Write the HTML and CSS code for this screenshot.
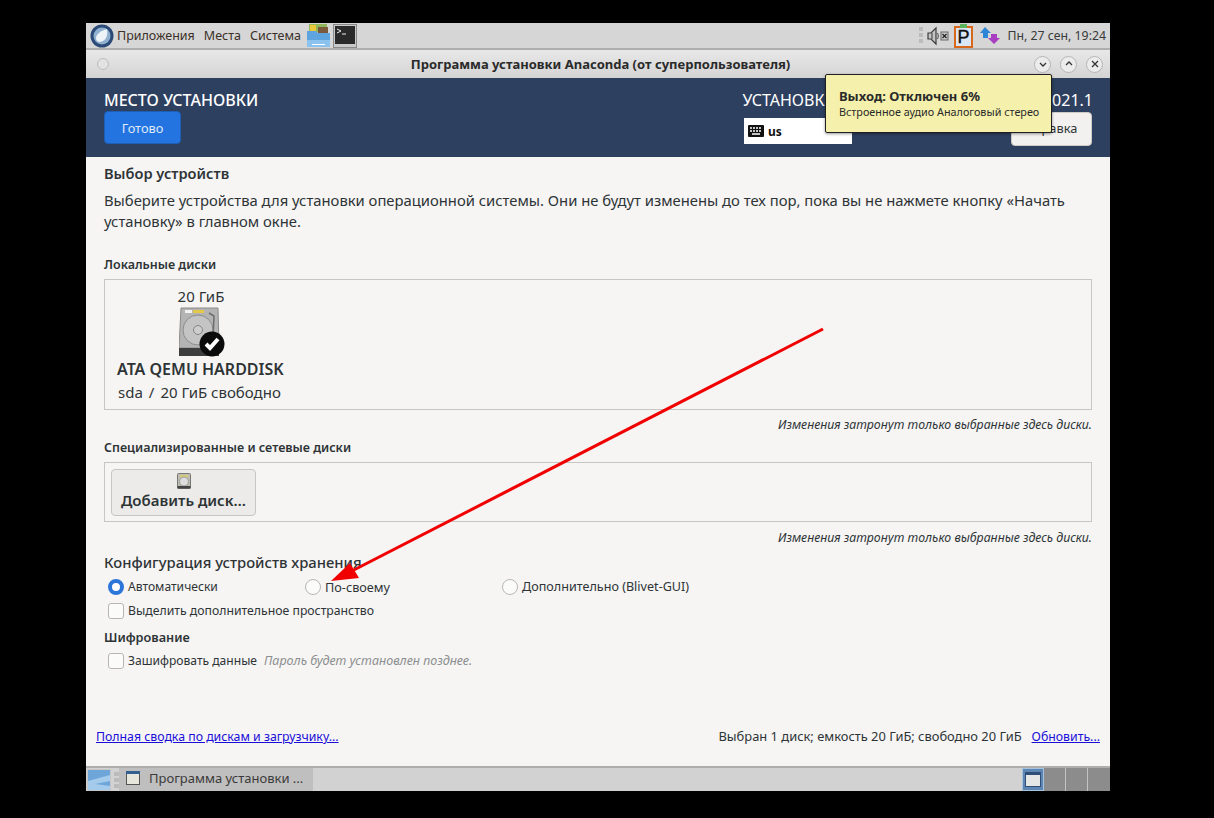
FILE: index.html
```html
<!DOCTYPE html>
<html lang="ru">
<head>
<meta charset="utf-8">
<title>Anaconda</title>
<link rel="stylesheet" href="styles.css">
</head>
<body>
<div class="screen">
  <div class="panel">
    <svg class="logo" width="24" height="24" viewBox="0 0 24 24"><circle cx="12" cy="12" r="11.500" fill="#2b4a78"/><circle cx="12" cy="12" r="8.500" fill="#8fb0cf"/><path d="M17 5c1 5 0 12-7 13-4 0-5-4-3-7 2-3 6-5 10-6z" fill="#eef3f7"/></svg>
    <span class="menu first">Приложения</span>
    <span class="menu">Места</span>
    <span class="menu">Система</span>
    <svg class="launcher" width="25" height="25" viewBox="0 0 25 25"><rect x="3" y="1" width="18" height="8" fill="#8fb75a"/><rect x="4" y="2" width="6" height="6" fill="#e9c83c"/><rect x="12" y="4" width="10" height="7" fill="#7a5a3a"/><path d="M1 8h9l2 2h12v13H1z" fill="#5ea5e0"/><rect x="1" y="17" width="23" height="7" fill="#8cc3ee"/><rect x="6" y="21" width="13" height="1" fill="#fff"/></svg>
    <svg class="launcher term" width="24" height="24" viewBox="0 0 24 24"><rect x=".5" y=".5" width="23" height="23" fill="#c9c9c9" stroke="#8a8a8a"/><rect x="2" y="2" width="20" height="18" fill="#2a2a2a"/><path d="M4 5l4 2-4 2" fill="none" stroke="#eee"/><path d="M9 10h4" stroke="#eee"/></svg>
    <div class="tray">
      <span class="grip"></span>
      <svg width="22" height="20" viewBox="0 0 22 20"><path d="M1 7h3l5-5v16l-5-5H1z" fill="#c4c4c4" stroke="#3c3c3c" stroke-width="1.200"/><path d="M5 7v6" stroke="#3c3c3c"/><path d="M10.500 7c1 2 1 4 0 6" fill="none" stroke="#444"/><rect x="14" y="6" width="7" height="8" fill="#ccc" stroke="#666"/><path d="M15.500 8l4 4m0-4l-4 4" stroke="#222" stroke-width="1.300"/></svg>
      <svg class="clip" width="19" height="24" viewBox="0 0 19 24"><rect x="1" y="3" width="17" height="20" fill="#dbe7f5" stroke="#d8691c" stroke-width="2"/><rect x="6" y="0" width="7" height="4" fill="#5bb35b"/><text x="9.500" y="19" text-anchor="middle" class="clip-p">P</text></svg>
      <svg class="net" width="22" height="20" viewBox="0 0 22 20"><path d="M6 1l6 6H9v5H4V7H1z" fill="#2f86d6"/><path d="M15 18l-6-6h3V8h6v4h3z" fill="#a83fc0"/></svg>
      <span class="clock">Пн, 27 сен, 19:24</span>
    </div>
  </div>

  <div class="titlebar">
    <span class="dot"></span>
    <span class="title">Программа установки Anaconda (от суперпользователя)</span>
    <div class="winbtns">
      <span class="winbtn"><svg width="10" height="10" viewBox="0 0 10 10"><path d="M2 4l3 3 3-3" fill="none" stroke="#333" stroke-width="1.300"/></svg></span>
      <span class="winbtn"><svg width="10" height="10" viewBox="0 0 10 10"><path d="M2 6l3-3 3 3" fill="none" stroke="#333" stroke-width="1.300"/></svg></span>
      <span class="winbtn"><svg width="10" height="10" viewBox="0 0 10 10"><path d="M2 2l6 6m0-6l-6 6" fill="none" stroke="#333" stroke-width="1.300"/></svg></span>
    </div>
  </div>

  <header class="head">
    <div class="head-left">
      <div class="head-title">МЕСТО УСТАНОВКИ</div>
      <button class="done">Готово</button>
    </div>
    <div class="head-right">
      <div class="head-product">УСТАНОВКА ROSA FRESH DESKTOP R11 2021.1</div>
      <div class="head-row">
        <div class="kbd">
          <svg width="16" height="12" viewBox="0 0 16 12"><rect width="16" height="12" rx="1" fill="#111"/><path d="M2 3h2m1 0h2m1 0h2m1 0h2M2 6h2m1 0h2m1 0h2m1 0h2M4 9h8" stroke="#fff" stroke-width="1.300"/></svg>
          <span>us</span>
        </div>
        <button class="help">Справка</button>
      </div>
    </div>
  </header>

  <main class="content">
    <h2 class="h-main">Выбор устройств</h2>
    <p class="intro">Выберите устройства для установки операционной системы. Они не будут изменены до тех пор, пока вы не нажмете кнопку «Начать установку» в главном окне.</p>

    <h3 class="h-sub local">Локальные диски</h3>
    <section class="box disks">
      <div class="disk">
        <div class="size">20 ГиБ</div>
        <svg class="hdd" width="46" height="50" viewBox="0 0 46 50">
          <path d="M2 1h37l1 40H0z" fill="#b4b4b4" stroke="#8a8a8a"/>
          <rect x="0" y="41" width="40" height="8" fill="#3d3d3d"/>
          <rect x="14" y="3" width="11" height="3" fill="#e3c84a"/>
          <rect x="6" y="3" width="7" height="3" fill="#f2f2f2"/>
          <circle cx="19" cy="23" r="15" fill="#c4c4c4" stroke="#8c8c8c"/>
          <circle cx="19" cy="23" r="4.500" fill="#cdcdcd" stroke="#858585"/>
          <path d="M30 6l5 3-1 22" fill="none" stroke="#6d6d6d" stroke-width="1.500"/>
          <circle cx="33" cy="37" r="12.500" fill="#0b0b0b"/>
          <path d="M27 37l4 4 8-9" fill="none" stroke="#fff" stroke-width="4"/>
        </svg>
        <div class="disk-name">ATA QEMU HARDDISK</div>
        <div class="disk-info"><span>sda</span><span class="sl">/</span><span>20 ГиБ свободно</span></div>
      </div>
    </section>
    <p class="note">Изменения затронут только выбранные здесь диски.</p>

    <h3 class="h-sub special">Специализированные и сетевые диски</h3>
    <section class="box adds">
      <button class="add">
        <svg width="16" height="16" viewBox="0 0 16 16"><rect x="1.500" y=".5" width="13" height="15" rx="1" fill="#bdbdb0" stroke="#777"/><rect x="4" y="2" width="8" height="2" fill="#d8cd77"/><circle cx="8" cy="8.500" r="4.500" fill="#ddd" stroke="#999"/><rect x="1.500" y="13" width="13" height="2.500" fill="#444"/></svg>
        <span>Добавить диск…</span>
      </button>
    </section>
    <p class="note note-last">Изменения затронут только выбранные здесь диски.</p>

    <h2 class="h-config">Конфигурация устройств хранения</h2>
    <div class="radios">
      <label class="opt opt-auto"><span class="radio on"></span>Автоматически</label>
      <label class="opt opt-own"><span class="radio"></span>По-своему</label>
      <label class="opt opt-adv"><span class="radio"></span>Дополнительно (Blivet-GUI)</label>
    </div>
    <label class="opt check-row"><span class="check"></span>Выделить дополнительное пространство</label>
    <h3 class="h-enc">Шифрование</h3>
    <label class="opt enc-row"><span class="check"></span>Зашифровать данные<em class="hint">Пароль будет установлен позднее.</em></label>

    <div class="summary">
      <a class="link" href="#">Полная сводка по дискам и загрузчику...</a>
      <div class="summary-right">
        <span class="summary-text">Выбран 1 диск; емкость 20 ГиБ; свободно 20 ГиБ</span>
        <a class="link" href="#">Обновить...</a>
      </div>
    </div>
  </main>

  <footer class="taskbar">
    <svg class="showdesk" width="24" height="22" viewBox="0 0 24 22"><rect x=".5" y=".5" width="23" height="21" fill="#6fa6da" stroke="#c6c6c6"/><path d="M1 12l22-6v6L8 15l15 2v4H1z" fill="#a5cbec"/></svg>
    <span class="task-grip"></span>
    <div class="task">
      <svg width="14" height="14" viewBox="0 0 14 14"><rect x=".5" y=".5" width="13" height="13" fill="#e6e6dc" stroke="#555"/><rect x="0" y="0" width="14" height="3" fill="#34608f"/></svg>
      <span>Программа установки ...</span>
    </div>
    <div class="pager">
      <span class="ws active"><svg width="16" height="15" viewBox="0 0 16 15"><rect x=".5" y=".5" width="15" height="14" fill="#e4e7e6" stroke="#2f4f78"/><rect width="16" height="3" fill="#2f4f78"/></svg></span>
      <span class="ws"></span>
      <span class="ws"></span>
      <span class="ws last"></span>
    </div>
  </footer>

  <aside class="tooltip">
    <div class="tip-title">Выход: Отключен 6%</div>
    <div class="tip-sub">Встроенное аудио Аналоговый стерео</div>
  </aside>

  <svg class="arrow" width="510" height="270" viewBox="0 0 510 270"><path d="M495 5L20 249" stroke="#f00000" stroke-width="3" fill="none"/><polygon points="3,257 22,239 31,254" fill="#f00000"/></svg>
</div>
</body>
</html>
```
FILE: styles.css
```css
* { box-sizing: border-box; }
html, body { margin: 0; height: 100%; background: #000; }
body { font-family: "Noto Sans", sans-serif; color: #2e3436; overflow: hidden; }
.screen { position: relative; width: 1024px; height: 768px; margin: 23px 0 0 86px; background: #f6f5f4; display: flex; flex-direction: column; overflow: hidden; }

.panel { height: 27px; flex: none; display: flex; align-items: center; padding: 0 4px; background: #d6d6d6; border-bottom: 2px solid #aeaeae; font-size: 12.500px; color: #3a3028; }
.logo { flex: none; margin-right: 3px; }
.menu { margin-left: 9px; white-space: nowrap; }
.menu.first { margin-left: 0; }
.launcher { flex: none; margin-left: 5px; }
.launcher.term { margin-left: 2px; }
.tray { margin-left: auto; display: flex; align-items: center; gap: 3px; color: #3a3a3a; }
.grip { width: 4px; height: 17px; background: repeating-linear-gradient(#bbb 0 4px, #d6d6d6 4px 6px); margin-right: 1px; }
.clip { margin-left: 2px; }
.clip-p { font: 400 18px "Liberation Sans", sans-serif; fill: #111; stroke: #111; stroke-width: .4px; }
.net { margin: 0 3px; }
.clock { font-size: 12.300px; }

.titlebar { height: 28px; flex: none; display: flex; align-items: center; padding: 0 7px 0 11px; background: linear-gradient(#e8e8e8, #d4d4d4); }
.dot { width: 12px; height: 12px; border-radius: 50%; background: #e2e2e2; border: 1px solid #bdbdbd; }
.title { flex: 1; text-align: center; font-size: 13px; font-weight: 700; color: #2a2a2a; padding-left: 58px; white-space: nowrap; }
.winbtns { display: flex; gap: 9px; }
.winbtn { width: 17px; height: 17px; border-radius: 50%; border: 1px solid #b5b5b5; background: #ececec; display: flex; align-items: center; justify-content: center; }

.head { height: 79px; flex: none; background: #2e4060; color: #fff; display: flex; justify-content: space-between; padding: 12px 18px 0; }
.head-title { font-size: 16px; font-weight: 500; line-height: 20px; }
.done { display: block; width: 77px; height: 33px; margin-top: 1px; border: 1px solid #1c5fb4; border-radius: 4px; background: #2374e0; color: #dfe9f7; font: 12.800px "Noto Sans", sans-serif; }
.head-right { width: 348px; }
.head-product { font-size: 16px; line-height: 20px; display: flex; justify-content: flex-end; white-space: nowrap; margin-right: -1px; }
.head-row { display: flex; justify-content: space-between; margin-top: 2px; }
.kbd { width: 108px; height: 26px; margin-top: 6px; background: #fff; color: #111; font-size: 12px; font-weight: 700; display: flex; align-items: center; gap: 4px; padding-left: 4px; }
.help { width: 81px; height: 34px; padding: 0 0 2px; border: 1px solid #cfcbc4; border-radius: 4px; background: #f3f1ef; color: #2e3436; font: 12.800px "Noto Sans", sans-serif; }

.content { flex: 1; padding: 0 18px; position: relative; display: flex; flex-direction: column; }
.h-main { margin: 7px 0 0; font-size: 14.600px; font-weight: 600; line-height: 19px; }
.intro { margin: 7px 0 0; font-size: 14.800px; line-height: 21px; width: 988px; }
.h-sub { margin: 0; font-size: 12.500px; font-weight: 600; line-height: 16px; }
.local { margin-top: 25px; }
.special { margin-top: 7px; }
.box { width: 988px; border: 1px solid #c8c6c3; flex: none; }
.disks { height: 131px; margin-top: 6px; padding: 7px 12px 0; }
.disk { width: 190px; }
.size { width: 168px; text-align: center; font-size: 15px; line-height: 19px; }
.hdd { display: block; margin: 1px 0 0 62px; }
.disk-name { font-size: 16px; font-weight: 600; line-height: 20px; margin-top: 2px; white-space: nowrap; }
.disk-info { font-size: 15px; line-height: 20px; margin: 3px 0 0 1px; white-space: nowrap; display: flex; gap: 6px; }
.note { width: 988px; margin: 7px 0 0; text-align: right; font-style: italic; font-size: 12.300px; line-height: 16px; }
.note-last { margin-top: 8px; }
.adds { height: 60px; margin-top: 6px; padding: 6px; }
.add { width: 145px; height: 47px; border: 1px solid #c8c6c3; border-radius: 4px; background: #ecebe9; color: #2e3436; font: 600 15px "Noto Sans", sans-serif; display: flex; flex-direction: column; align-items: center; padding: 3px 0 0; gap: 0; }
.add span { line-height: 22px; }
.h-config { margin: 6px 0 0; font-size: 14.800px; font-weight: 500; line-height: 20px; }
.radios { display: flex; margin-top: 7px; align-items: center; }
.opt { display: flex; align-items: center; font-size: 12.250px; line-height: 16px; white-space: nowrap; padding-left: 4px; }
.opt-auto { width: 201px; font-size: 12.100px; }
.opt-own { width: 197px; font-size: 12.700px; padding-left: 0; line-height: 15px; }
.opt-adv { font-size: 12.600px; padding-left: 0; }
.radio, .check { width: 16px; height: 16px; flex: none; margin-right: 4px; background: #fbfbfa; border: 1px solid #b8b6b2; }
.radio { border-radius: 50%; }
.radio.on { background: #fff; border: 4px solid #2b76d8; }
.check { border-radius: 3px; }
.check-row { margin-top: 8px; }
.h-enc { margin: 10px 0 0; font-size: 12.700px; font-weight: 600; line-height: 16px; }
.enc-row { margin-top: 8px; font-size: 12.100px; }
.hint { margin-left: 7px; color: #8c8f8f; font-size: 12.500px; }
.summary { position: absolute; left: 10px; right: 10px; top: 572px; display: flex; justify-content: space-between; font-size: 12.300px; line-height: 16px; }
.summary-right { display: flex; gap: 10px; align-items: flex-start; }
.summary-text { font-size: 12.900px; line-height: 15px; }
.link { color: #1a0dd8; text-decoration: underline; }

.taskbar { height: 25px; flex: none; display: flex; align-items: center; background: #d2d2d2; border-top: 2px solid #aeaeae; font-size: 13px; color: #3a3a3a; }
.showdesk { flex: none; margin-left: 1px; }
.task-grip { width: 5px; height: 16px; margin: 0 0 0 3px; background: repeating-linear-gradient(#bbb 0 4px, #d2d2d2 4px 6px); }
.task { width: 194px; height: 100%; display: flex; align-items: center; gap: 9px; padding: 0 0 3px 7px; background: #bfbfbf; white-space: nowrap; }
.pager { margin-left: auto; display: flex; height: 100%; }
.ws { width: 22px; background: #8c8c8c; border-right: 1px solid #c4c4c4; display: flex; align-items: center; justify-content: center; }
.ws.active { background: #5d86b3; border: 1px solid #a5c2de; }
.ws.last { border-right: 0; }

.tooltip { position: absolute; left: 739px; top: 51px; width: 227px; height: 59px; padding: 12px 13px 0; background: #f5f1ac; border: 1px solid #1f1f1f; border-radius: 2px; box-shadow: 0 1px 3px rgba(0,0,0,.4); color: #2a2a2a; }
.tip-title { font-size: 13px; font-weight: 700; line-height: 18px; white-space: nowrap; }
.tip-sub { font-size: 10.800px; line-height: 14px; white-space: nowrap; }

.arrow { position: absolute; left: 242px; top: 301px; pointer-events: none; }
```
